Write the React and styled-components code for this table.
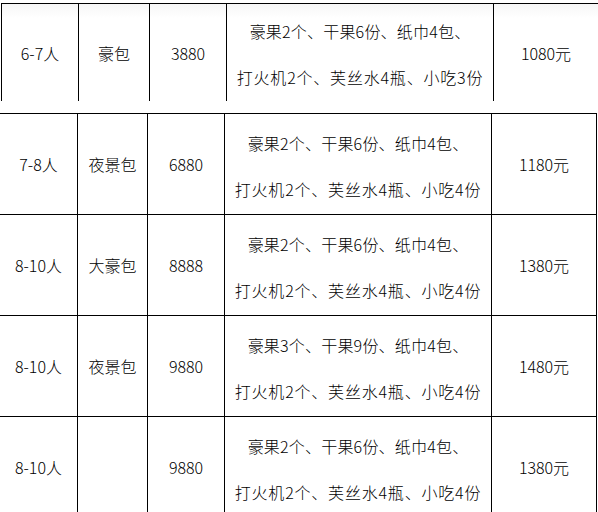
import React from "react";
import styled, { createGlobalStyle } from "styled-components";

const GlobalStyle = createGlobalStyle`
  *, *::before, *::after {
    box-sizing: border-box;
  }
  html, body {
    margin: 0;
    padding: 0;
    background: #ffffff;
    overflow: hidden;
  }
  body {
    font-family: "Noto Sans CJK SC", "Noto Sans", sans-serif;
    color: #000;
  }
`;

const Page = styled.div`
  width: 598px;
  height: 512px;
  overflow: hidden;
  display: flex;
  flex-direction: column;
`;

const Table = styled.div`
  display: flex;
  flex-direction: column;
  margin-left: ${(p) => p.$offsetX}px;
  margin-top: ${(p) => p.$offsetY}px;
  width: ${(p) => p.$width}px;
  flex-shrink: 0;
`;

const Row = styled.div`
  display: grid;
  grid-template-columns: ${(p) => p.$cols};
  height: ${(p) => p.$height}px;
  flex-shrink: 0;
  border-top: 1px solid #000;
  background: ${(p) =>
    p.$shade ? "linear-gradient(#f6f6f6, #ffffff 14px)" : "transparent"};
`;

const Cell = styled.div`
  display: flex;
  align-items: center;
  justify-content: center;
  font-size: 16px;
  font-weight: 300;
  line-height: 20px;
  white-space: nowrap;
  border-left: ${(p) => (p.$left ? "1px solid #000" : "none")};
  border-right: ${(p) => (p.$right ? "1px solid #000" : "none")};
`;

const DescCell = styled(Cell)`
  flex-direction: column;
  justify-content: flex-start;
  padding-top: ${(p) => p.$pad}px;
`;

const Line = styled.div`
  height: 46px;
  line-height: 46px;
  font-size: 16px;
  font-weight: 300;
  text-align: center;
  letter-spacing: ${(p) => p.$spacing}px;
`;

const PriceText = styled.span`
  margin-left: ${(p) => p.$shift || 0}px;
`;

const top = {
  people: "6-7人",
  room: "豪包",
  min: "3880",
  l1: "豪果2个、干果6份、纸巾4包、",
  l2: "打火机2个、芙丝水4瓶、小吃3份",
  price: "1080元",
};

const rows = [
  {
    people: "7-8人",
    room: "夜景包",
    min: "6880",
    l1: "豪果2个、干果6份、纸巾4包、",
    l2: "打火机2个、芙丝水4瓶、小吃4份",
    price: "1180元",
  },
  {
    people: "8-10人",
    room: "大豪包",
    min: "8888",
    l1: "豪果2个、干果6份、纸巾4包、",
    l2: "打火机2个、芙丝水4瓶、小吃4份",
    price: "1380元",
  },
  {
    people: "8-10人",
    room: "夜景包",
    min: "9880",
    l1: "豪果3个、干果9份、纸巾4包、",
    l2: "打火机2个、芙丝水4瓶、小吃4份",
    price: "1480元",
  },
  {
    people: "8-10人",
    room: "",
    min: "9880",
    l1: "豪果2个、干果6份、纸巾4包、",
    l2: "打火机2个、芙丝水4瓶、小吃4份",
    price: "1380元",
  },
];

export default function App() {
  return (
    <>
      <GlobalStyle />
      <Page>
        <Table $offsetX={1} $offsetY={3} $width={640}>
          <Row $cols="77px 71px 77px 267px 115px 33px" $height={98} $shade>
            <Cell $left>{top.people}</Cell>
            <Cell $left>{top.room}</Cell>
            <Cell $left>{top.min}</Cell>
            <DescCell $left $pad={4}>
              <Line $spacing={0.2}>{top.l1}</Line>
              <Line $spacing={0.8}>{top.l2}</Line>
            </DescCell>
            <Cell $left>
              <PriceText $shift={-10}>{top.price}</PriceText>
            </Cell>
            <Cell $left />
          </Row>
        </Table>
        <Table $offsetX={0} $offsetY={12} $width={597}>
          {rows.map((r, i) => (
            <Row key={i} $cols="78px 70px 77px 267px 105px" $height={101}>
              <Cell $right>{r.people}</Cell>
              <Cell $right>{r.room}</Cell>
              <Cell $right>{r.min}</Cell>
              <DescCell $right $pad={6}>
                <Line $spacing={0.2}>{r.l1}</Line>
                <Line $spacing={0.8}>{r.l2}</Line>
              </DescCell>
              <Cell $right>{r.price}</Cell>
            </Row>
          ))}
        </Table>
      </Page>
    </>
  );
}
